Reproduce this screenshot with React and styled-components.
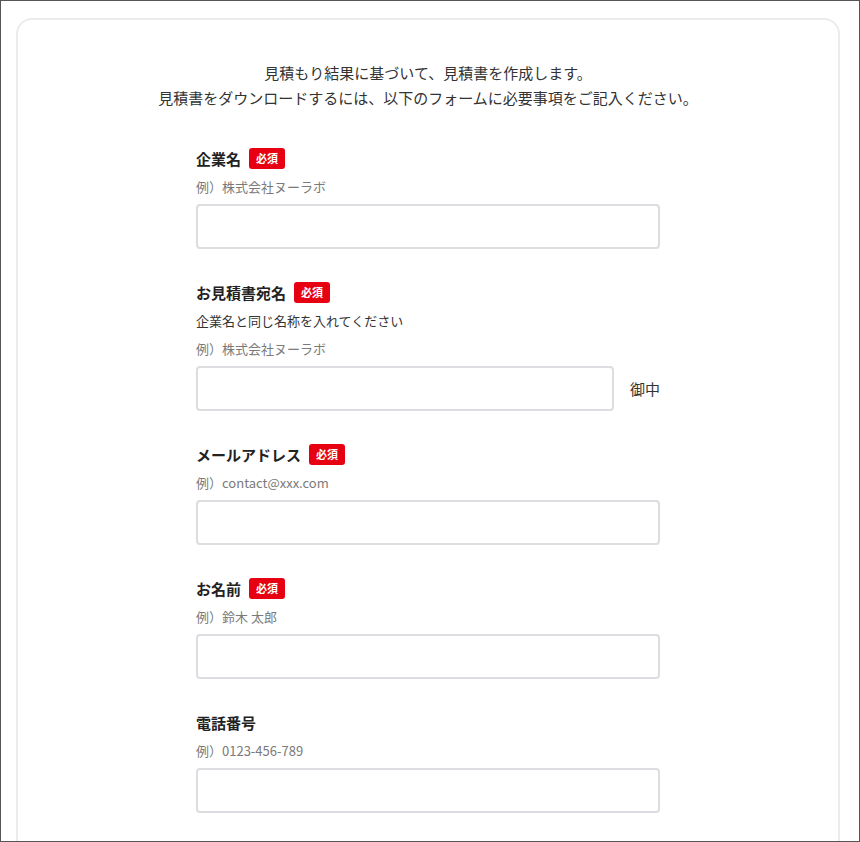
import React from "react";
import styled, { createGlobalStyle } from "styled-components";

const Global = createGlobalStyle`
  html, body { margin: 0; padding: 0; background: #fff; }
  body { font-family: "Noto Sans CJK JP", "Noto Sans", sans-serif; color: #333; }
  * { box-sizing: border-box; }
`;

const Frame = styled.div`
  height: 842px;
  border: 1px solid #555;
  overflow: hidden;
  padding: 17px 19px 0 15px;
`;

const Card = styled.div`
  border: 2px solid #ebebeb;
  border-radius: 16px;
  background: #fff;
  padding: 40px 0 80px;
  min-height: 1000px;
`;

const Intro = styled.p`
  margin: 0;
  text-align: center;
  font-size: 15px;
  line-height: 25px;
  color: #333;
`;

const Form = styled.div`
  width: 464px;
  margin: 37px auto 0;
  display: flex;
  flex-direction: column;
  gap: 32px;
`;

const Field = styled.div`
  display: flex;
  flex-direction: column;
`;

const LabelRow = styled.div`
  display: flex;
  align-items: center;
  gap: 8px;
  height: 22px;
`;

const Label = styled.span`
  font-size: 15px;
  font-weight: 700;
  color: #222;
`;

const Badge = styled.span`
  background: #e60012;
  color: #fff;
  font-size: 11px;
  font-weight: 700;
  line-height: 21px;
  height: 21px;
  padding: 0 7px;
  border-radius: 3px;
`;

const Note = styled.div`
  margin-top: 8px;
  font-size: 13px;
  line-height: 20px;
  color: ${(p) => (p.$muted ? "#7a7a7a" : "#333")};
`;

const InputRow = styled.div`
  margin-top: 7px;
  display: flex;
  align-items: center;
  gap: 16px;
`;

const Input = styled.input`
  flex: 1;
  width: 100%;
  height: 45px;
  border: 2px solid #dcdce1;
  border-radius: 4px;
  background: #fff;
  font-size: 15px;
  padding: 0 12px;
  outline: none;
`;

const Suffix = styled.span`
  font-size: 15px;
  color: #333;
`;

const fields = [
  { label: "企業名", required: true, hint: "例）株式会社ヌーラボ" },
  {
    label: "お見積書宛名",
    required: true,
    note: "企業名と同じ名称を入れてください",
    hint: "例）株式会社ヌーラボ",
    suffix: "御中",
  },
  { label: "メールアドレス", required: true, hint: "例）contact@xxx.com" },
  { label: "お名前", required: true, hint: "例）鈴木 太郎" },
  { label: "電話番号", required: false, hint: "例）0123-456-789" },
];

export default function App() {
  return (
    <>
      <Global />
      <Frame>
        <Card>
          <Intro>
            見積もり結果に基づいて、見積書を作成します。
            <br />
            見積書をダウンロードするには、以下のフォームに必要事項をご記入ください。
          </Intro>
          <Form>
            {fields.map((f) => (
              <Field key={f.label}>
                <LabelRow>
                  <Label>{f.label}</Label>
                  {f.required && <Badge>必須</Badge>}
                </LabelRow>
                {f.note && <Note>{f.note}</Note>}
                <Note $muted>{f.hint}</Note>
                <InputRow>
                  <Input type="text" />
                  {f.suffix && <Suffix>{f.suffix}</Suffix>}
                </InputRow>
              </Field>
            ))}
          </Form>
        </Card>
      </Frame>
    </>
  );
}
